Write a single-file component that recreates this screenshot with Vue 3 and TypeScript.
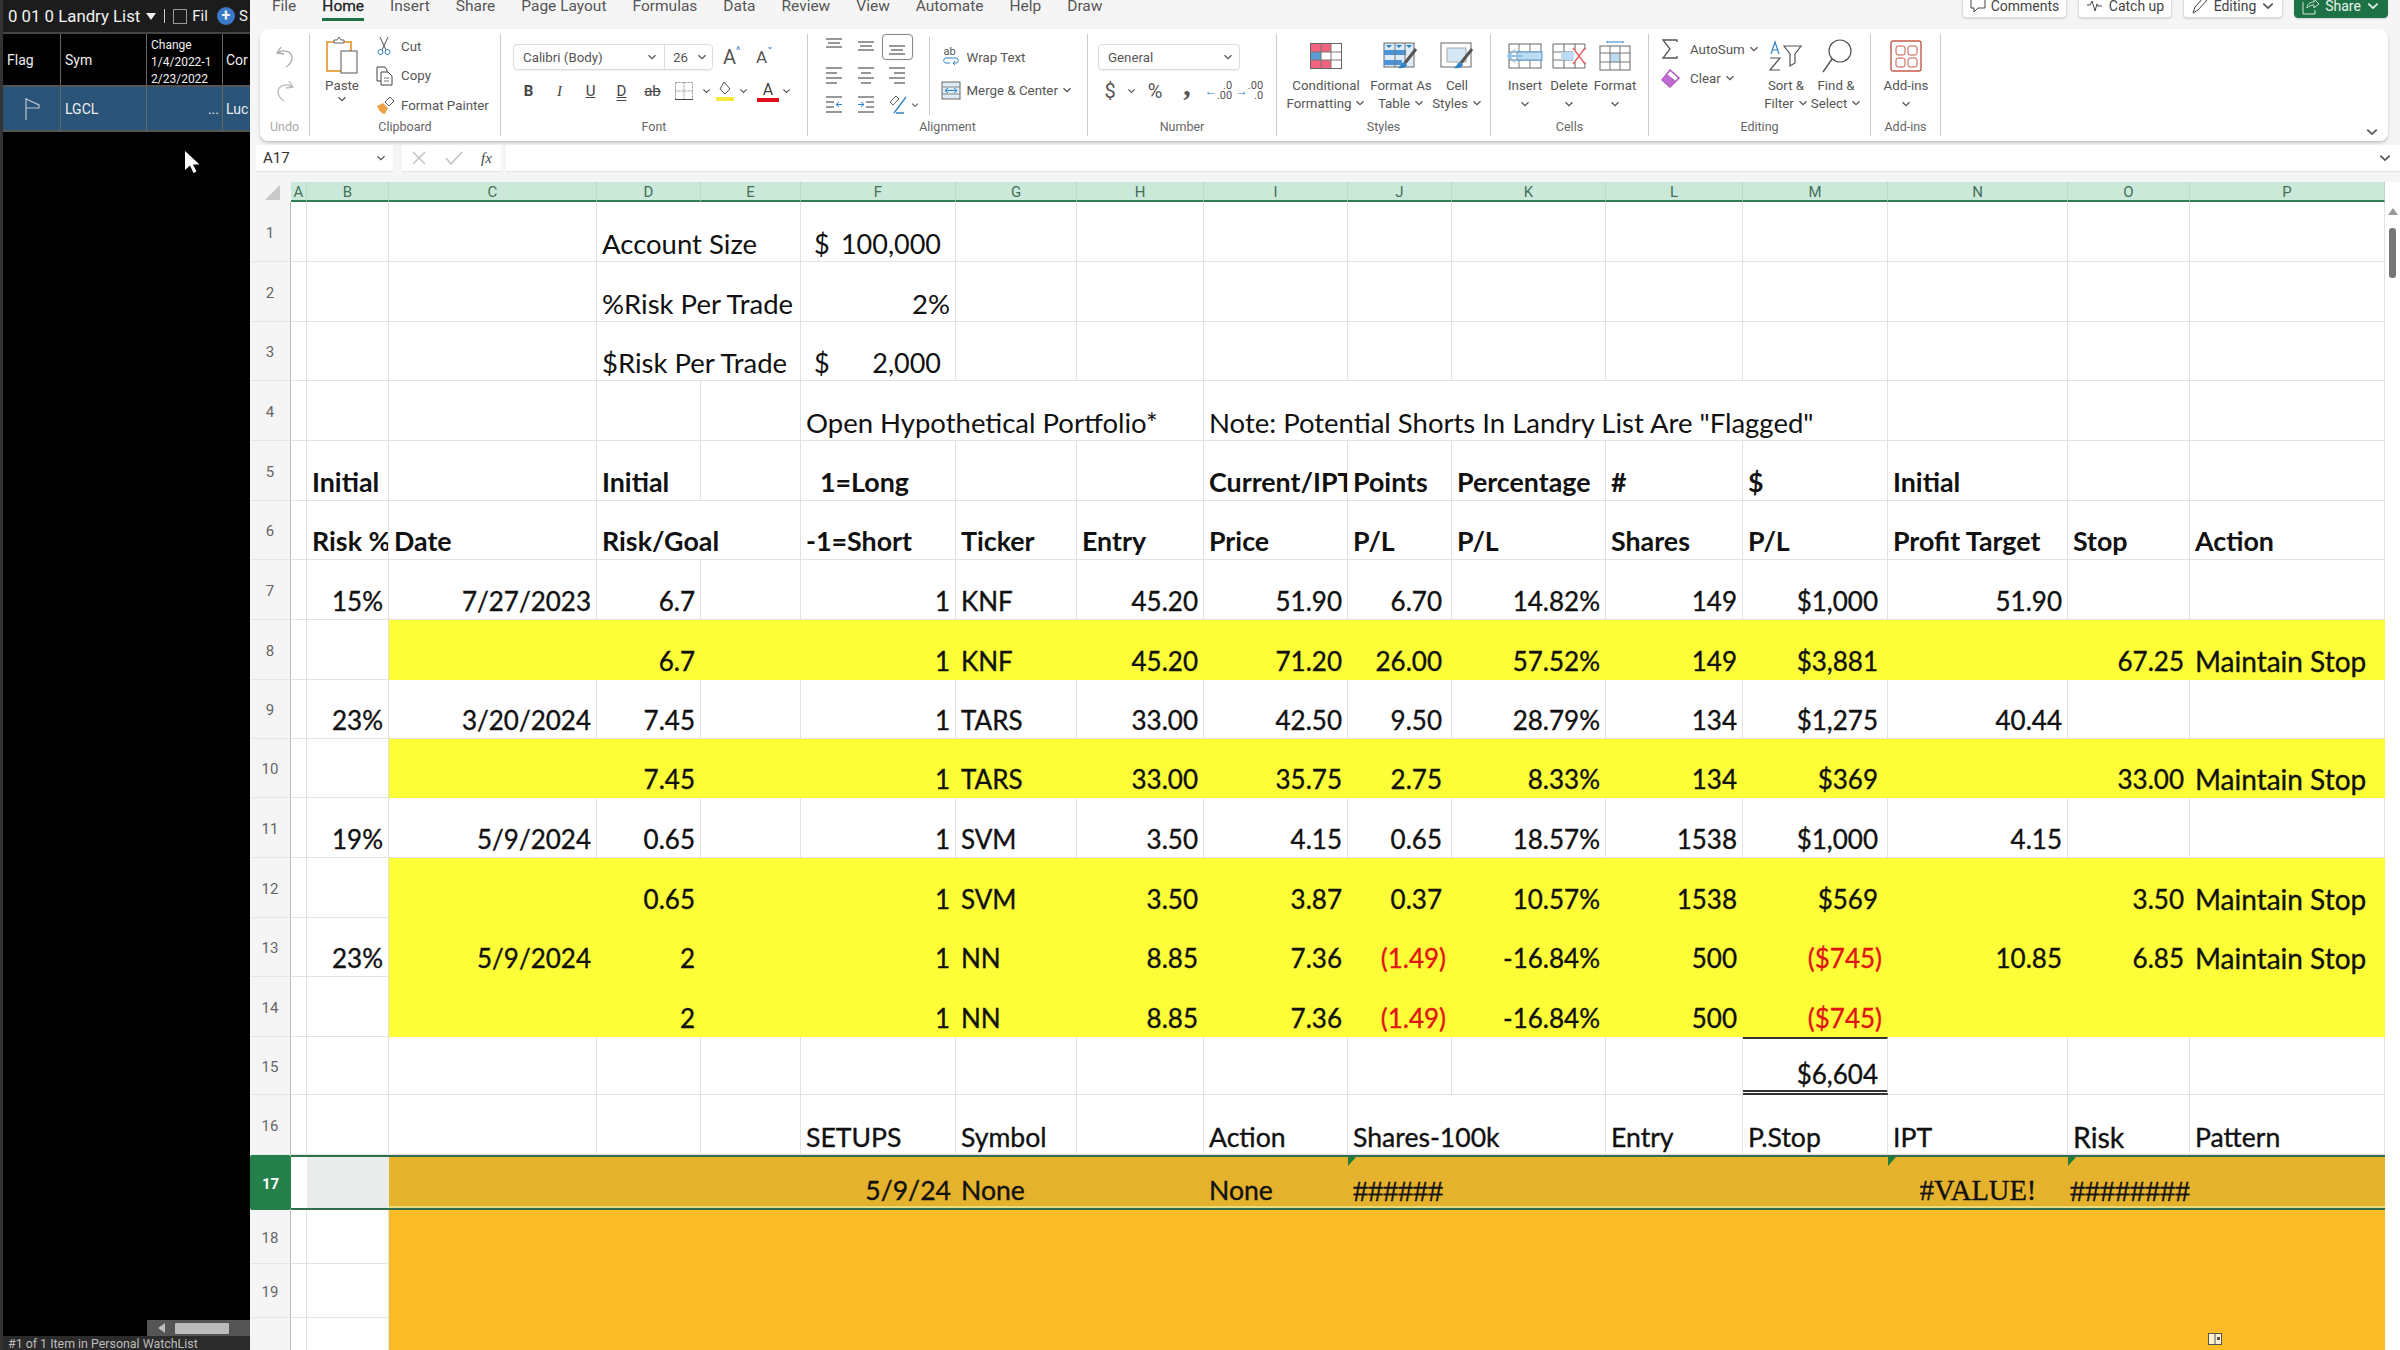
<script setup lang="ts">
interface RowDef {
  n: number
  fill?: 'y' | 'y13' | 'gold' | 'orange'
  kind?: 'plain' | 'head' | 'data' | 'sub'
  v?: Record<string, string>
  span?: Record<string, number>
  right?: string[]
}
interface CellView {
  key: string
  text: string
  pre: string
  span: number
  cls: string[]
}

const letters = ['A', 'B', 'C', 'D', 'E', 'F', 'G', 'H', 'I', 'J', 'K', 'L', 'M', 'N', 'O', 'P']
const tabs = ['File', 'Home', 'Insert', 'Share', 'Page Layout', 'Formulas', 'Data', 'Review', 'View', 'Automate', 'Help', 'Draw']

const defs: RowDef[] = [
  { n: 1, kind: 'plain', v: { D: 'Account Size', F: '100,000' }, span: { D: 2 } },
  { n: 2, kind: 'plain', v: { D: '%Risk Per Trade', F: '2%' }, span: { D: 2 }, right: ['F'] },
  { n: 3, kind: 'plain', v: { D: '$Risk Per Trade', F: '2,000' }, span: { D: 2 } },
  { n: 4, kind: 'plain', v: { F: 'Open Hypothetical Portfolio*', I: 'Note: Potential Shorts In Landry List Are "Flagged"' }, span: { F: 3, I: 5 } },
  { n: 5, kind: 'head', v: { B: 'Initial', D: 'Initial', F: '1=Long', I: 'Current/IPT', J: 'Points', K: 'Percentage', L: '#', M: '$', N: 'Initial' } },
  { n: 6, kind: 'head', v: { B: 'Risk %', C: 'Date', D: 'Risk/Goal', F: '-1=Short', G: 'Ticker', H: 'Entry', I: 'Price', J: 'P/L', K: 'P/L', L: 'Shares', M: 'P/L', N: 'Profit Target', O: 'Stop', P: 'Action' }, span: { D: 2 } },
  { n: 7, kind: 'data', v: { B: '15%', C: '7/27/2023', D: '6.7', F: '1', G: 'KNF', H: '45.20', I: '51.90', J: '6.70', K: '14.82%', L: '149', M: '$1,000', N: '51.90' } },
  { n: 8, kind: 'data', fill: 'y', v: { D: '6.7', F: '1', G: 'KNF', H: '45.20', I: '71.20', J: '26.00', K: '57.52%', L: '149', M: '$3,881', O: '67.25', P: 'Maintain Stop' } },
  { n: 9, kind: 'data', v: { B: '23%', C: '3/20/2024', D: '7.45', F: '1', G: 'TARS', H: '33.00', I: '42.50', J: '9.50', K: '28.79%', L: '134', M: '$1,275', N: '40.44' } },
  { n: 10, kind: 'data', fill: 'y', v: { D: '7.45', F: '1', G: 'TARS', H: '33.00', I: '35.75', J: '2.75', K: '8.33%', L: '134', M: '$369', O: '33.00', P: 'Maintain Stop' } },
  { n: 11, kind: 'data', v: { B: '19%', C: '5/9/2024', D: '0.65', F: '1', G: 'SVM', H: '3.50', I: '4.15', J: '0.65', K: '18.57%', L: '1538', M: '$1,000', N: '4.15' } },
  { n: 12, kind: 'data', fill: 'y', v: { D: '0.65', F: '1', G: 'SVM', H: '3.50', I: '3.87', J: '0.37', K: '10.57%', L: '1538', M: '$569', O: '3.50', P: 'Maintain Stop' } },
  { n: 13, kind: 'data', fill: 'y', v: { B: '23%', C: '5/9/2024', D: '2', F: '1', G: 'NN', H: '8.85', I: '7.36', J: '(1.49)', K: '-16.84%', L: '500', M: '($745)', N: '10.85', O: '6.85', P: 'Maintain Stop' } },
  { n: 14, kind: 'data', fill: 'y', v: { D: '2', F: '1', G: 'NN', H: '8.85', I: '7.36', J: '(1.49)', K: '-16.84%', L: '500', M: '($745)' } },
  { n: 15, kind: 'data', v: { M: '$6,604' } },
  { n: 16, kind: 'sub', v: { F: 'SETUPS', G: 'Symbol', I: 'Action', J: 'Shares-100k', L: 'Entry', M: 'P.Stop', N: 'IPT', O: 'Risk', P: 'Pattern' }, span: { J: 2 } },
  { n: 17, kind: 'sub', fill: 'gold', v: { F: '5/9/24', G: 'None', I: 'None', J: '######', N: '#VALUE!', O: '########' }, right: ['F'] },
  { n: 18, fill: 'orange' },
  { n: 19, fill: 'orange' },
  { n: 20, fill: 'orange' },
]

function buildCells(r: RowDef): CellView[] {
  const out: CellView[] = []
  let skip = 0
  letters.forEach((c, i) => {
    if (skip > 0) {
      skip--
      return
    }
    const text = r.v?.[c] ?? ''
    const span = r.span?.[c] ?? 1
    skip = span - 1
    const cls: string[] = []
    if (i >= 2 && r.fill) cls.push(`fill-${r.fill}`)
    if (r.n === 17) {
      cls.push('sel')
      if (c === 'B') cls.push('sel-b')
    }
    if (r.kind) cls.push(r.kind)
    const isRight = (r.kind === 'data' && c !== 'G' && c !== 'P') || r.right?.includes(c)
    cls.push(isRight ? 'r' : 'l')
    if (text.startsWith('(')) cls.push('neg')
    else if (r.kind === 'data' && (c === 'J' || c === 'M')) cls.push('inset')
    if (r.kind === 'data' && c === 'P') cls.push('maint')
    if (r.n === 15 && c === 'M') cls.push('total')
    if (r.n === 5 && c === 'F') cls.push('indent')
    if (r.n === 16 && c === 'O') cls.push('risk')
    if (r.n === 17 && (c === 'J' || c === 'O')) cls.push('hash')
    if (r.n === 17 && c === 'J') cls.push('hash-j')
    if (r.n === 17 && c === 'N') cls.push('value')
    if (r.n === 17 && (c === 'J' || c === 'N' || c === 'O')) cls.push('tri')
    const pre = (r.n === 1 || r.n === 3) && c === 'F' ? '$' : ''
    if (pre) cls.push('acct')
    out.push({ key: `${c}${r.n}`, text, pre, span, cls })
  })
  return out
}

const rows = defs.map((d) => ({ n: d.n, label: d.n === 20 ? '' : String(d.n), cells: buildCells(d) }))
</script>

<template>
  <svg class="defs" aria-hidden="true">
    <symbol id="chev" viewBox="0 0 10 6"><path d="M1.5 1.2 5 4.6l3.5-3.4" fill="none" stroke="currentColor" stroke-width="1.3" /></symbol>
  </svg>
  <div class="app">
    <aside class="watch">
      <div class="wtitle">
        <span class="wname">0 01 0 Landry List</span><span class="wcaret"></span><span class="wbar"></span>
        <span class="wcheck"></span><span class="wfil">Fil</span><span class="wplus">+</span><span class="wfil">S</span>
      </div>
      <div class="wgrid whead">
        <div>Flag</div>
        <div>Sym</div>
        <div class="wchange">Change<br />1/4/2022-1<br />2/23/2022</div>
        <div class="wclip">Cor</div>
      </div>
      <div class="wgrid wrow">
        <div class="wflag">
          <svg width="20" height="24" viewBox="0 0 20 24"><path d="M4 1v22M4 2l13 6v3H4" fill="none" stroke="#b9c6d2" stroke-width="1.2" /></svg>
        </div>
        <div>LGCL</div>
        <div class="wdots">...</div>
        <div class="wclip">Luc</div>
      </div>
      <svg class="cursor" width="16" height="24" viewBox="0 0 16 24"><path d="M1 1v19l5-4.5L9.500 23l3-1.400L9 14.500h6.500z" fill="#fff" /></svg>
      <div class="wspace"></div>
      <div class="whscroll"><span class="warrow"></span><span class="wthumb"></span></div>
      <div class="wstatus">#1 of 1 Item in Personal WatchList</div>
    </aside>

    <main class="excel">
      <div class="tabbar">
        <div class="tabs">
          <span v-for="t in tabs" :key="t" class="tab" :class="{ on: t === 'Home' }">{{ t }}</span>
        </div>
        <div class="actions">
          <span class="act comments">
            <svg width="16" height="18" viewBox="0 0 16 18"><path d="M1 0v11h3v4l4-4h7V0" fill="none" stroke="#444" /></svg>Comments
          </span>
          <span class="act catch">
            <svg width="18" height="14" viewBox="0 0 18 14"><path d="M1 6h3l2-4 3 10 2-7 1 2h4" fill="none" stroke="#444" /></svg>Catch up
          </span>
          <span class="act editing">
            <svg width="18" height="18" viewBox="0 0 18 18"><path d="M2 16l2-6L13 0l3 3-9 10z" fill="none" stroke="#444" /></svg>Editing
            <svg class="chev big"><use href="#chev" /></svg>
          </span>
          <span class="act share">
            <svg width="18" height="18" viewBox="0 0 18 18"><path d="M1 5v12h12v-4M5 11c0-4 3-6 7-6V2l5 5-5 4V8c-3 0-5 1-7 3z" fill="none" stroke="#cfe8db" /></svg>Share
            <svg class="chev big"><use href="#chev" /></svg>
          </span>
        </div>
      </div>

      <div class="ribbon">
        <section class="group g-undo">
          <div class="body undo-body">
            <svg width="20" height="22" viewBox="0 0 20 22"><path d="M6 1 2 7l7 1M2.500 7C8 3 17 5 17 12c0 4-3 7-6 9" fill="none" stroke="#aaa" stroke-width="1.300" /></svg>
            <svg width="20" height="22" viewBox="0 0 20 22"><path d="M14 1l4 6-7 1M17.500 7C12 3 3 5 3 12c0 4 3 7 6 9" fill="none" stroke="#bbb" stroke-width="1.300" /></svg>
          </div>
          <div class="glabel dim">Undo</div>
        </section>

        <section class="group g-clip">
          <div class="body clip-body">
            <div class="paste">
              <svg width="34" height="38" viewBox="0 0 34 38">
                <rect x="2" y="6" width="24" height="29" fill="#fff" stroke="#e8a84d" stroke-width="2" />
                <path d="M9 7V4h3l2-3 2 3h3v3z" fill="#fff" stroke="#666" />
                <rect x="16" y="15" width="16" height="22" fill="#fff" stroke="#555" />
              </svg>
              <span>Paste</span>
              <svg class="chev"><use href="#chev" /></svg>
            </div>
            <div class="cliplist">
              <div class="line">
                <span class="ic"><svg width="16" height="20" viewBox="0 0 16 20"><path d="M4 1l6 13M12 1L6 14" fill="none" stroke="#555" /><circle cx="4.500" cy="16" r="2.500" fill="none" stroke="#2f82c4" /><circle cx="11.500" cy="16" r="2.500" fill="none" stroke="#2f82c4" /></svg></span>Cut
              </div>
              <div class="line">
                <span class="ic"><svg width="18" height="20" viewBox="0 0 18 20"><path d="M5 15H1V1h8l2 3v2" fill="none" stroke="#444" /><path d="M5 6h7l4 4v9H5z" fill="#fff" stroke="#444" /><path d="M8 12h5M8 15h5" stroke="#777" /></svg></span>Copy
              </div>
              <div class="line">
                <span class="ic"><svg width="20" height="20" viewBox="0 0 20 20"><path d="M1 11l6-3 5 5-3 6c-3 0-6-3-8-8z" fill="#eea24a" /><path d="M9 7l5-5 4 4-5 5z" fill="#fff" stroke="#555" /></svg></span>Format Painter
              </div>
            </div>
          </div>
          <div class="glabel">Clipboard</div>
        </section>

        <section class="group g-font">
          <div class="body col font-body">
            <div class="frow">
              <div class="combo fontcombo">
                <span class="cname">Calibri (Body)</span><svg class="chev"><use href="#chev" /></svg>
                <span class="csep"></span>
                <span class="csize">26</span><svg class="chev"><use href="#chev" /></svg>
              </div>
              <span class="growa">A<sup class="upc">^</sup></span>
              <span class="growa small">A<sup class="dnc">ˇ</sup></span>
            </div>
            <div class="frow2">
              <span class="fb s31 bold">B</span>
              <span class="fb s31 ital">I</span>
              <span class="fb s31 und">U</span>
              <span class="fb s31 dund">D</span>
              <span class="fb s31 strike">ab</span>
              <span class="fb s31">
                <svg width="20" height="20" viewBox="0 0 20 20"><path d="M1.500 1.500h17v17h-17zM10 1.500v17M1.500 10h17" fill="none" stroke="#999" stroke-dasharray="2 1" /><path d="M1 18.500h18" stroke="#444" /></svg>
              </span>
              <svg class="chev w14"><use href="#chev" /></svg>
              <span class="fb s22">
                <svg width="20" height="22" viewBox="0 0 20 22"><path d="M9 2l6 7-5 5-5-5z" fill="none" stroke="#555" /><rect x="1" y="17" width="18" height="4" fill="#f5ea3b" /></svg>
              </span>
              <svg class="chev w14"><use href="#chev" /></svg>
              <span class="fb s22 colora">A</span>
              <svg class="chev w14"><use href="#chev" /></svg>
            </div>
          </div>
          <div class="glabel">Font</div>
        </section>

        <section class="group g-align">
          <div class="body align-body">
            <div class="aligngrid">
              <span class="ai">
                <svg width="20" height="26" viewBox="0 0 20 26"><path d="M2 5h16M4 9h12M2 13h16" stroke="#777" stroke-width="1.400" /></svg>
              </span>
              <span class="ai">
                <svg width="20" height="26" viewBox="0 0 20 26"><path d="M2 8h16M4 12h12M2 16h16" stroke="#777" stroke-width="1.400" /></svg>
              </span>
              <span class="ai selected">
                <svg width="20" height="26" viewBox="0 0 20 26"><path d="M2 12h16M4 16h12M2 20h16" stroke="#777" stroke-width="1.400" /></svg>
              </span>
              <span class="ai">
                <svg width="20" height="26" viewBox="0 0 20 26"><path d="M2 5h16M2 10h11M2 15h16M2 20h11" stroke="#777" stroke-width="1.400" /></svg>
              </span>
              <span class="ai">
                <svg width="20" height="26" viewBox="0 0 20 26"><path d="M2 5h16M5 10h10M2 15h16M5 20h10" stroke="#777" stroke-width="1.400" /></svg>
              </span>
              <span class="ai">
                <svg width="20" height="26" viewBox="0 0 20 26"><path d="M2 5h16M7 10h11M2 15h16M7 20h11" stroke="#777" stroke-width="1.400" /></svg>
              </span>
              <span class="ai">
                <svg width="20" height="26" viewBox="0 0 20 26"><path d="M2 5h16M2 10h8M2 15h8M2 20h16" stroke="#777" stroke-width="1.400" /><path d="M18 12.500h-6m3-2.500-3 2.500 3 2.500" fill="none" stroke="#2f82c4" /></svg>
              </span>
              <span class="ai">
                <svg width="20" height="26" viewBox="0 0 20 26"><path d="M2 5h16M10 10h8M10 15h8M2 20h16" stroke="#777" stroke-width="1.400" /><path d="M2 12.500h6m-3-2.500 3 2.500-3 2.500" fill="none" stroke="#2f82c4" /></svg>
              </span>
              <span class="ai wide">
                <svg width="22" height="26" viewBox="0 0 22 26"><path d="M3 10l6-6 3 3-6 6z" fill="none" stroke="#666" /><path d="M19 5 7 21M9 21h8" fill="none" stroke="#2f82c4" stroke-width="1.300" /></svg>
                <svg class="chev tiny"><use href="#chev" /></svg>
              </span>
            </div>
            <span class="vsep"></span>
            <div class="wraplist">
              <div class="line">
                <span class="ic2"><svg width="20" height="22" viewBox="0 0 20 22"><path d="M9 17H5c-3 0-3-5 0-5h10c3 0 3 5 0 5h-3m2-2-2 2 2 2" fill="none" stroke="#2f82c4" /></svg><span class="abtext">ab</span></span>Wrap Text
              </div>
              <div class="line">
                <span class="ic2"><svg width="20" height="22" viewBox="0 0 20 22"><rect x="1" y="3" width="18" height="17" fill="#dcebf7" stroke="#666" /><path d="M1 8h18M1 15h18" stroke="#888" /><path d="M4 11.500h12m-9-2.500-3 2.500L7 14m6-5 3 2.500-3 2.500" fill="none" stroke="#2f82c4" /></svg></span>Merge &amp; Center
                <svg class="chev inl"><use href="#chev" /></svg>
              </div>
            </div>
          </div>
          <div class="glabel">Alignment</div>
        </section>

        <section class="group g-num">
          <div class="body col num-body">
            <div class="combo numcombo"><span class="cname">General</span><svg class="chev"><use href="#chev" /></svg></div>
            <div class="nrow">
              <span class="nb n-dollar">$</span>
              <svg class="chev w14"><use href="#chev" /></svg>
              <span class="nb n-pct">%</span>
              <span class="nb n-comma">,</span>
              <span class="nb n-dec"><i class="arrow">←</i><span class="stack">.0<br />.00</span></span>
              <span class="nb n-dec"><i class="arrow">→</i><span class="stack">.00<br />.0</span></span>
            </div>
          </div>
          <div class="glabel">Number</div>
        </section>

        <section class="group g-styles">
          <div class="body">
            <div class="big w78">
              <span class="bicon">
                <svg width="32" height="26" viewBox="0 0 32 26"><rect x=".5" y=".5" width="31" height="25" fill="#fff" stroke="#666" /><rect x="1" y="1" width="20" height="8" fill="#f2637e" /><rect x="1" y="17" width="20" height="8" fill="#f2637e" /><rect x="1" y="9" width="10" height="8" fill="#5b9bd5" /><path d="M11 1v24M21 1v24M1 9h30M1 17h30" stroke="#777" fill="none" /></svg>
              </span>
              <span>Conditional</span>
              <span>Formatting<svg class="chev inl"><use href="#chev" /></svg></span>
            </div>
            <div class="big w72">
              <span class="bicon">
                <svg width="36" height="28" viewBox="0 0 36 28"><rect x="1" y="1" width="30" height="24" fill="#dcebf7" stroke="#666" /><rect x="1" y="8" width="22" height="5" fill="#4b93d6" /><rect x="1" y="18" width="18" height="5" fill="#4b93d6" /><path d="M3 3l3 3 3-3zM13 3l3 3 3-3zM23 3l3 3 3-3z" fill="#2f82c4" /><path d="M12 1v24M22 1v24" stroke="#777" /><path d="M33 7 22 21" stroke="#555" stroke-width="3" /><path d="M21 20c-3 1-3 4-6 6 5 1 8-1 9-3z" fill="#2f82c4" /></svg>
              </span>
              <span>Format As</span>
              <span>Table<svg class="chev inl"><use href="#chev" /></svg></span>
            </div>
            <div class="big w40">
              <span class="bicon">
                <svg width="36" height="28" viewBox="0 0 36 28"><rect x="2" y="1" width="30" height="24" fill="#fff" stroke="#666" /><rect x="8" y="6" width="19" height="14" fill="#d5e6f5" stroke="#aaa" /><path d="M33 7 22 21" stroke="#555" stroke-width="3" /><path d="M21 20c-3 1-3 4-6 6 5 1 8-1 9-3z" fill="#2f82c4" /></svg>
              </span>
              <span>Cell</span>
              <span>Styles<svg class="chev inl"><use href="#chev" /></svg></span>
            </div>
          </div>
          <div class="glabel">Styles</div>
        </section>

        <section class="group g-cells">
          <div class="body">
            <div class="big w44">
              <span class="bicon">
                <svg width="36" height="26" viewBox="0 0 36 26"><rect x="2" y="1" width="32" height="24" fill="#fff" stroke="#666" /><path d="M2 9h32M2 17h32M12 1v24M23 1v24" stroke="#777" /><rect x="10" y="9" width="25" height="8" fill="#bcdcf2" stroke="#5b9bd5" /><path d="M16 13H2m6-6-7 6 7 6" fill="none" stroke="#8dc2ea" stroke-width="1.800" /></svg>
              </span>
              <span>Insert</span>
              <svg class="chev"><use href="#chev" /></svg>
            </div>
            <div class="big w44">
              <span class="bicon">
                <svg width="34" height="26" viewBox="0 0 34 26"><path d="M1 1h32M1 25h32M1 1v24M33 1v6M33 19v6M12 1v24M23 1v6M23 19v6" stroke="#666" fill="none" /><path d="M1 9h20M1 17h20" stroke="#777" /><rect x="9" y="9" width="13" height="8" fill="#bcdcf2" /><path d="M21 5l12 16M33 5 21 21" stroke="#ea5a5a" stroke-width="1.300" /></svg>
              </span>
              <span>Delete</span>
              <svg class="chev"><use href="#chev" /></svg>
            </div>
            <div class="big w48">
              <span class="bicon">
                <svg width="32" height="30" viewBox="0 0 32 30"><path d="M8 1h16M8 0v2M24 0v2" stroke="#2f82c4" /><rect x="1" y="5" width="30" height="24" fill="#fff" stroke="#666" /><rect x="11" y="12" width="10" height="9" fill="#bcdcf2" /><path d="M1 12h30M1 21h30M11 5v24M21 5v24" stroke="#777" /></svg>
              </span>
              <span>Format</span>
              <svg class="chev"><use href="#chev" /></svg>
            </div>
          </div>
          <div class="glabel">Cells</div>
        </section>

        <section class="group g-edit">
          <div class="body">
            <div class="editlist">
              <div class="line">
                <span class="ic3"><svg width="18" height="20" viewBox="0 0 18 20"><path d="M16 3V1H2l7 9-7 9h14v-2" fill="none" stroke="#555" stroke-width="1.300" /></svg></span>AutoSum
                <svg class="chev inl"><use href="#chev" /></svg>
              </div>
              <div class="line">
                <span class="ic3"><svg width="20" height="20" viewBox="0 0 20 20"><path d="M1 12l8-10 9 8-9 9z" fill="#fff" stroke="#b04fc0" stroke-width="1.500" /><path d="M1 12l5-6 9 7-6 6z" fill="#c06bd0" /></svg></span>Clear
                <svg class="chev inl"><use href="#chev" /></svg>
              </div>
            </div>
            <div class="big w50">
              <span class="bicon">
                <svg width="36" height="32" viewBox="0 0 36 32"><path d="M3 14l4-12 4 12M4 10h6" fill="none" stroke="#2f82c4" stroke-width="1.200" /><path d="M2 18h10L2 30h10" fill="none" stroke="#555" stroke-width="1.200" /><path d="M16 6h17l-6 8v9l-5 3V14z" fill="none" stroke="#555" stroke-width="1.200" /></svg>
              </span>
              <span>Sort &amp;</span>
              <span>Filter<svg class="chev inl"><use href="#chev" /></svg></span>
            </div>
            <div class="big w50">
              <span class="bicon">
                <svg width="36" height="34" viewBox="0 0 36 34"><circle cx="22" cy="12" r="11" fill="none" stroke="#555" stroke-width="1.200" /><path d="M14 20 5 33" stroke="#555" stroke-width="1.400" /></svg>
              </span>
              <span>Find &amp;</span>
              <span>Select<svg class="chev inl"><use href="#chev" /></svg></span>
            </div>
          </div>
          <div class="glabel">Editing</div>
        </section>

        <section class="group g-addins">
          <div class="body">
            <div class="big w70">
              <span class="bicon">
                <svg width="32" height="32" viewBox="0 0 32 32"><rect x="1" y="1" width="30" height="30" rx="2" fill="#fff" stroke="#c7594b" stroke-width="1.400" /><rect x="6" y="6" width="9" height="9" rx="2" fill="none" stroke="#c7594b" /><rect x="18" y="6" width="9" height="9" rx="2" fill="none" stroke="#c7594b" /><rect x="6" y="18" width="9" height="9" rx="2" fill="none" stroke="#c7594b" /><rect x="18" y="18" width="9" height="9" rx="2" fill="none" stroke="#c7594b" /></svg>
              </span>
              <span>Add-ins</span>
              <svg class="chev"><use href="#chev" /></svg>
            </div>
          </div>
          <div class="glabel">Add-ins</div>
        </section>
        <div class="collapse"><svg class="chev big"><use href="#chev" /></svg></div>
      </div>

      <div class="fbar">
        <div class="namebox"><span>A17</span><svg class="chev"><use href="#chev" /></svg></div>
        <div class="fxbox">
          <svg width="16" height="16" viewBox="0 0 16 16"><path d="M2 2l12 12M14 2 2 14" stroke="#bbb" stroke-width="1.200" /></svg>
          <svg width="18" height="16" viewBox="0 0 18 16"><path d="M1 8l5 6L17 2" fill="none" stroke="#bbb" stroke-width="1.200" /></svg>
          <span class="fx">fx</span>
        </div>
        <div class="finput"><svg class="chev big"><use href="#chev" /></svg></div>
      </div>

      <div class="sheet">
        <div class="corner">
          <svg width="17" height="17" viewBox="0 0 17 17"><path d="M16 1v15H1z" fill="#c9c9c9" /></svg>
        </div>
        <div v-for="l in letters" :key="l" class="colh">{{ l }}</div>
        <div class="vscroll"><span class="vup"></span><span class="vthumb"></span></div>
        <template v-for="row in rows" :key="row.n">
          <div class="rh" :class="{ active: row.n === 17 }">{{ row.label }}</div>
          <div
            v-for="cell in row.cells"
            :key="cell.key"
            class="cell"
            :class="cell.cls"
            :style="cell.span > 1 ? { gridColumn: `span ${cell.span}` } : undefined"
          >
            <span v-if="cell.pre">{{ cell.pre }}</span><span class="ct">{{ cell.text }}</span>
          </div>
        </template>
        <svg class="floaticon" width="14" height="12" viewBox="0 0 14 12"><rect x=".5" y=".5" width="13" height="11" fill="#fff3cf" stroke="#555" /><path d="M7 .5v11" stroke="#555" /><rect x="9" y="4" width="3" height="3" fill="#555" /></svg>
      </div>
    </main>
  </div>
</template>

<style>
html,
body {
  margin: 0;
  background: #000;
}
</style>

<style scoped>
.defs {
  position: absolute;
  width: 0;
  height: 0;
}
.app {
  display: flex;
  width: 2400px;
  height: 1350px;
  overflow: hidden;
  font-family: Roboto, 'Liberation Sans', sans-serif;
}

/* watchlist */
.watch {
  position: relative;
  width: 250px;
  flex: none;
  display: flex;
  flex-direction: column;
  background: #000;
  color: #eee;
  border-left: 3px solid #333;
  box-sizing: border-box;
}
.wtitle {
  height: 32px;
  display: flex;
  align-items: center;
  background: #1c1c1c;
  font-size: 16.800px;
  color: #f2f2f2;
  padding-left: 5px;
  overflow: hidden;
  white-space: nowrap;
}
.wcaret {
  width: 0;
  height: 0;
  margin-left: 6px;
  border: 5px solid transparent;
  border-top: 7px solid #eee;
  border-bottom: 0;
}
.wbar {
  width: 1px;
  height: 14px;
  background: #ccc;
  margin: 0 8px;
}
.wcheck {
  width: 12px;
  height: 13px;
  border: 1px solid #999;
  margin-right: 5px;
}
.wfil {
  font-size: 15px;
}
.wplus {
  width: 18px;
  height: 18px;
  border-radius: 50%;
  background: #3a78c8;
  margin: 0 4px 0 9px;
  text-align: center;
  line-height: 17px;
  font-size: 16px;
  font-weight: 700;
  flex: none;
}
.wgrid {
  display: grid;
  grid-template-columns: 58px 86px 76px 27px;
  font-size: 14px;
}
.wgrid > div {
  border-right: 1px solid #666;
  border-bottom: 2px solid #555;
  box-sizing: border-box;
  display: flex;
  align-items: center;
  padding-left: 4px;
  overflow: hidden;
  white-space: nowrap;
}
.whead {
  height: 55px;
  border-top: 2px solid #444;
  box-sizing: border-box;
}
.whead .wchange {
  display: block;
  font-size: 12px;
  line-height: 17px;
  padding-top: 3px;
}
.wrow {
  height: 45px;
  background: #2a5378;
}
.wrow .wflag {
  justify-content: center;
  padding-left: 0;
}
.wrow .wdots {
  justify-content: flex-end;
  padding-right: 3px;
}
.wclip {
  border-right: 0 !important;
  padding-left: 3px !important;
}
.wspace {
  flex: 1;
}
.cursor {
  position: absolute;
  left: 181px;
  top: 150px;
}
.whscroll {
  margin-left: 144px;
  height: 16px;
  background: #555;
  display: flex;
  align-items: center;
}
.warrow {
  width: 0;
  height: 0;
  margin-left: 11px;
  border: 5px solid transparent;
  border-right: 7px solid #bbb;
  border-left: 0;
}
.wthumb {
  width: 54px;
  height: 11px;
  background: #bbb;
  border-radius: 1px;
  margin-left: 10px;
}
.wstatus {
  height: 14px;
  background: #2b2b2b;
  color: #bbb;
  font-size: 12.400px;
  line-height: 16px;
  padding-left: 5px;
  white-space: nowrap;
  overflow: hidden;
}

/* excel */
.excel {
  flex: 1;
  min-width: 0;
  background: #f5f5f5;
  display: flex;
  flex-direction: column;
}
.tabbar {
  height: 29px;
  flex: none;
  display: flex;
  justify-content: space-between;
  padding: 0 12px 0 22px;
}
.tabs {
  display: flex;
  gap: 26px;
  align-items: flex-start;
  font-size: 15.500px;
  color: #555;
  margin-top: -6px;
}
.tab {
  line-height: 24px;
  padding-bottom: 0;
  border-bottom: 3px solid transparent;
  white-space: nowrap;
}
.tab.on {
  color: #222;
  border-bottom-color: #1e7145;
  -webkit-text-stroke: 0.3px #222;
}
.actions {
  display: flex;
  gap: 11px;
  align-items: flex-start;
  margin-top: -7px;
}
.act {
  height: 25px;
  box-sizing: border-box;
  display: flex;
  align-items: center;
  justify-content: center;
  gap: 5px;
  background: #fff;
  border: 1px solid #ddd;
  border-radius: 4px;
  font-size: 14px;
  color: #444;
  box-shadow: 0 1px 2px #0002;
}
.comments {
  width: 105px;
}
.catch {
  width: 94px;
}
.editing {
  width: 100px;
}
.share {
  width: 94px;
  background: #1e7145;
  color: #e8f3ed;
  border-color: #1e7145;
}
.share .chev {
  color: #e8f3ed;
}
.ribbon {
  margin-left: 10px;
  width: 2128px;
  height: 112px;
  flex: none;
  box-sizing: border-box;
  padding: 5px 0;
  background: #fff;
  border-radius: 8px;
  box-shadow: 0 2px 3px #0003;
  display: flex;
  font-size: 13.300px;
  color: #555;
  position: relative;
}
.group {
  flex: none;
  box-sizing: border-box;
  border-right: 1px solid #ccc;
  display: flex;
  flex-direction: column;
}
.g-undo {
  width: 50px;
}
.g-clip {
  width: 191px;
}
.g-font {
  width: 307px;
}
.g-align {
  width: 280px;
}
.g-num {
  width: 189px;
}
.g-styles {
  width: 214px;
}
.g-cells {
  width: 158px;
}
.g-edit {
  width: 222px;
}
.g-addins {
  width: 70px;
}
.body {
  flex: 1;
  min-height: 0;
  display: flex;
}
.col {
  flex-direction: column;
}
.glabel {
  height: 18px;
  line-height: 18px;
  text-align: center;
  font-size: 12.500px;
  color: #666;
}
.glabel.dim {
  color: #aaa;
}
.chev {
  width: 10px;
  height: 6px;
  color: #555;
  flex: none;
}
.chev.big {
  width: 14px;
  height: 8px;
}
.chev.inl {
  margin-left: 4px;
  vertical-align: 2px;
}
.chev.w14 {
  width: 9px;
  margin: 0 3px;
}
.chev.tiny {
  width: 8px;
  margin-left: 2px;
}
.undo-body {
  flex-direction: column;
  align-items: center;
  padding-top: 12px;
  gap: 12px;
}
.clip-body {
  padding-left: 14px;
}
.paste {
  width: 36px;
  display: flex;
  flex-direction: column;
  align-items: center;
  padding-top: 2px;
  gap: 3px;
}
.paste span {
  margin-top: 1px;
}
.cliplist {
  margin-left: 16px;
  display: flex;
  flex-direction: column;
  gap: 5.500px;
}
.line {
  height: 24px;
  display: flex;
  align-items: center;
  white-space: nowrap;
}
.ic {
  width: 25px;
  display: flex;
}
.font-body {
  padding-left: 12px;
  padding-top: 10px;
}
.frow {
  display: flex;
  align-items: center;
  height: 26px;
}
.combo {
  height: 26px;
  box-sizing: border-box;
  display: flex;
  align-items: center;
  border: 1px solid #ddd;
  border-radius: 4px;
  box-shadow: 0 1px 1px #0001;
  font-size: 13.300px;
  flex: none;
}
.fontcombo {
  width: 200px;
}
.cname {
  padding-left: 9px;
  flex: 1;
  white-space: nowrap;
}
.csep {
  width: 1px;
  height: 100%;
  background: #ddd;
  margin-left: 7px;
}
.csize {
  padding-left: 8px;
  width: 30px;
  box-sizing: border-box;
}
.fontcombo .chev:last-child {
  margin-right: 5px;
  margin-left: 2px;
}
.growa {
  font-size: 20px;
  margin-left: 10px;
  width: 23px;
  display: flex;
  color: #555;
}
.growa.small {
  font-size: 17px;
  margin-left: 10px;
}
.upc {
  font-size: 10px;
  color: #2f82c4;
  line-height: 12px;
}
.dnc {
  font-size: 13px;
  color: #2f82c4;
  line-height: 12px;
}
.frow2 {
  display: flex;
  align-items: center;
  height: 26px;
  margin-top: 8px;
}
.fb {
  display: flex;
  align-items: center;
  justify-content: center;
  font-size: 15px;
  color: #444;
  flex: none;
}
.s31 {
  width: 31px;
}
.s22 {
  width: 22px;
}
.bold {
  font-weight: 700;
}
.ital {
  font-style: italic;
  font-family: 'Liberation Serif', serif;
}
.und {
  text-decoration: underline;
}
.dund {
  text-decoration: underline double;
}
.strike {
  text-decoration: line-through;
}
.colora {
  font-size: 16px;
  margin-left: 6px;
  border-bottom: 4px solid #e00f1f;
  line-height: 17px;
}
.align-body {
  padding-left: 10.500px;
}
.aligngrid {
  width: 95px;
  display: grid;
  grid-template-columns: repeat(3, 31.500px);
  grid-auto-rows: 26px;
  row-gap: 3px;
}
.ai {
  display: flex;
  align-items: center;
  justify-content: center;
  border-radius: 4px;
  box-sizing: border-box;
  white-space: nowrap;
}
.ai.selected {
  border: 1px solid #888;
  box-shadow: 0 0 1px #0005;
}
.ai.wide {
  width: 42px;
}
.vsep {
  width: 1px;
  height: 78px;
  margin: 3px 11px 0 15px;
  background: #ccc;
}
.wraplist {
  padding-top: 11px;
  display: flex;
  flex-direction: column;
  gap: 9px;
}
.ic2 {
  position: relative;
  width: 26px;
  display: flex;
}
.abtext {
  position: absolute;
  left: 3px;
  top: -1px;
  font-size: 11px;
  color: #555;
}
.num-body {
  padding: 10px 0 0 10px;
}
.numcombo {
  width: 142px;
}
.numcombo .chev {
  margin-right: 6px;
}
.nrow {
  display: flex;
  align-items: center;
  height: 26px;
  margin-top: 8px;
  color: #555;
}
.nb {
  display: flex;
  align-items: center;
  justify-content: center;
  flex: none;
}
.n-dollar {
  width: 24px;
  font-size: 20px;
  margin-right: 2px;
}
.n-pct {
  width: 24px;
  font-size: 20px;
  margin-left: 4px;
}
.n-comma {
  width: 32px;
  font-family: 'Liberation Serif', serif;
  font-size: 30px;
  font-weight: 700;
  line-height: 20px;
  padding-bottom: 12px;
  box-sizing: border-box;
  margin-left: 4px;
}
.n-dec {
  width: 31px;
}
.arrow {
  font-style: normal;
  color: #2f82c4;
  font-size: 12px;
}
.stack {
  font-size: 11px;
  line-height: 10px;
  text-align: right;
}
.big {
  display: flex;
  flex-direction: column;
  align-items: center;
  line-height: 18px;
  white-space: nowrap;
  flex: none;
}
.bicon {
  height: 36px;
  display: flex;
  align-items: center;
  justify-content: center;
  margin: 4px 0 3px;
}
.big > .chev {
  margin-top: 6px;
}
.w78 {
  width: 78px;
}
.w72 {
  width: 72px;
}
.w40 {
  width: 40px;
}
.w44 {
  width: 44px;
}
.w48 {
  width: 48px;
}
.w50 {
  width: 50px;
}
.w70 {
  width: 70px;
}
.g-styles .body {
  padding-left: 10px;
}
.g-cells .body {
  padding-left: 12px;
}
.g-edit .body {
  padding-left: 12px;
}
.editlist {
  width: 100px;
  display: flex;
  flex-direction: column;
  gap: 5px;
  padding-top: 3px;
}
.ic3 {
  width: 29px;
  display: flex;
}
.collapse {
  margin-left: auto;
  align-self: flex-end;
  padding: 0 9px 0 0;
}
.fbar {
  height: 27px;
  flex: none;
  margin-top: 4px;
  padding-left: 6px;
  display: flex;
  gap: 5px;
}
.namebox,
.fxbox,
.finput {
  background: #fff;
  display: flex;
  align-items: center;
  box-sizing: border-box;
  border-bottom: 1px solid #e4e4e4;
}
.namebox {
  width: 137px;
  justify-content: space-between;
  padding: 0 7px;
  font-size: 15px;
  color: #333;
  margin-right: 4px;
}
.fxbox {
  width: 99px;
  padding-left: 9px;
  gap: 18px;
}
.fx {
  font-family: 'Liberation Serif', serif;
  font-style: italic;
  font-size: 15px;
  color: #444;
}
.finput {
  flex: 1;
  justify-content: flex-end;
  padding-right: 8px;
}

/* sheet */
.sheet {
  position: relative;
  margin-top: 10px;
  flex: 1;
  min-height: 0;
  overflow: hidden;
  background: #fff;
  display: grid;
  grid-template-columns: 41px 16px 82px 208px 104px 100px 155px 121px 127px 144px 104px 154px 137px 145px 180px 122px 195px 15px;
  grid-template-rows: 20px 60px 60px 59px 60px 60px 59px 60px 60px 59px 59px 60px 60px 59px 60px 58px 60px 55px 54px 54px 60px;
  font-family: Lato, 'Liberation Sans', sans-serif;
  font-size: 26px;
  color: #111;
}
.corner {
  background: #f5f5f5;
  display: flex;
  align-items: center;
  justify-content: center;
  padding-left: 4px;
}
.colh {
  background: #cbe9d9;
  border-right: 1px solid #b5dcc7;
  border-bottom: 2px solid #2f7d55;
  box-sizing: border-box;
  font-family: Roboto, sans-serif;
  font-size: 15px;
  color: #44705a;
  text-align: center;
  line-height: 21px;
}
.rh {
  background: #f5f5f5;
  border-right: 1px solid #bbb;
  border-bottom: 1px solid #e6e6e6;
  box-sizing: border-box;
  font-family: Roboto, sans-serif;
  font-size: 15px;
  color: #666;
  display: flex;
  align-items: center;
  justify-content: center;
  padding-top: 2px;
}
.rh.active {
  background: #23804a;
  color: #fff;
  font-weight: 700;
  border: 0;
  border-radius: 2px;
}
.cell {
  box-sizing: border-box;
  border-right: 1px solid #e2e2e2;
  border-bottom: 1px solid #e2e2e2;
  display: flex;
  align-items: flex-end;
  padding: 0 5px 2px;
  overflow: hidden;
  white-space: nowrap;
  min-width: 0;
  position: relative;
  line-height: 31px;
}
.cell.r {
  justify-content: flex-end;
}
.plain {
  font-size: 27.500px;
}
.head {
  font-size: 26.800px;
  font-weight: 700;
}
.sub {
  font-size: 26.600px;
  padding-bottom: 1px;
}
.data,
.sub {
  -webkit-text-stroke: 0.35px #111;
}
.inset {
  padding-right: 9px;
}
.maint {
  font-size: 28px;
}
.fill-y,
.fill-orange {
  border-color: transparent;
}
.fill-y {
  background: #fdfd38;
}
.fill-orange {
  background: #fbbc28;
}
.sel {
  border-top: 2px solid #2f6f50;
  border-bottom: 2px solid #2f6f50;
  border-right: 0;
  padding-bottom: 2px;
}
.sel-b {
  background: #e9ecea;
}
.fill-gold {
  background: #e4b22c;
  box-shadow: inset 0 -2px 0 #ecdc80;
}
.neg {
  color: #e01515;
  -webkit-text-stroke: 0.35px #e01515;
}
.total {
  border-top: 2px solid #333;
  border-bottom: 5px double #333;
  padding-bottom: 0;
  padding-right: 9px;
}
.indent {
  padding-left: 19px;
}
.risk {
  font-size: 28.500px;
}
.hash,
.value {
  font-family: 'Liberation Serif', serif;
}
.hash {
  font-size: 30px;
  padding-left: 2px;
}
.hash-j {
  padding-left: 5px;
}
.value {
  font-size: 28.500px;
  justify-content: center;
}
.tri::before {
  content: '';
  position: absolute;
  left: 0;
  top: 0;
  border-style: solid;
  border-width: 9px 8px 0 0;
  border-color: #1f7d3c transparent transparent transparent;
}
.acct {
  justify-content: space-between;
  padding: 0 14px 2px 13px;
  font-size: 27px;
}
.vscroll {
  grid-column: 18;
  grid-row: 1 / -1;
  background: #fff;
  display: flex;
  flex-direction: column;
  align-items: center;
  padding-top: 26px;
}
.vup {
  width: 0;
  height: 0;
  border: 5px solid transparent;
  border-bottom: 7px solid #999;
  border-top: 0;
}
.vthumb {
  width: 7px;
  height: 50px;
  margin-top: 13px;
  background: #777;
  border-radius: 3px;
}
.floaticon {
  position: absolute;
  left: 1958px;
  top: 1151px;
}
</style>
